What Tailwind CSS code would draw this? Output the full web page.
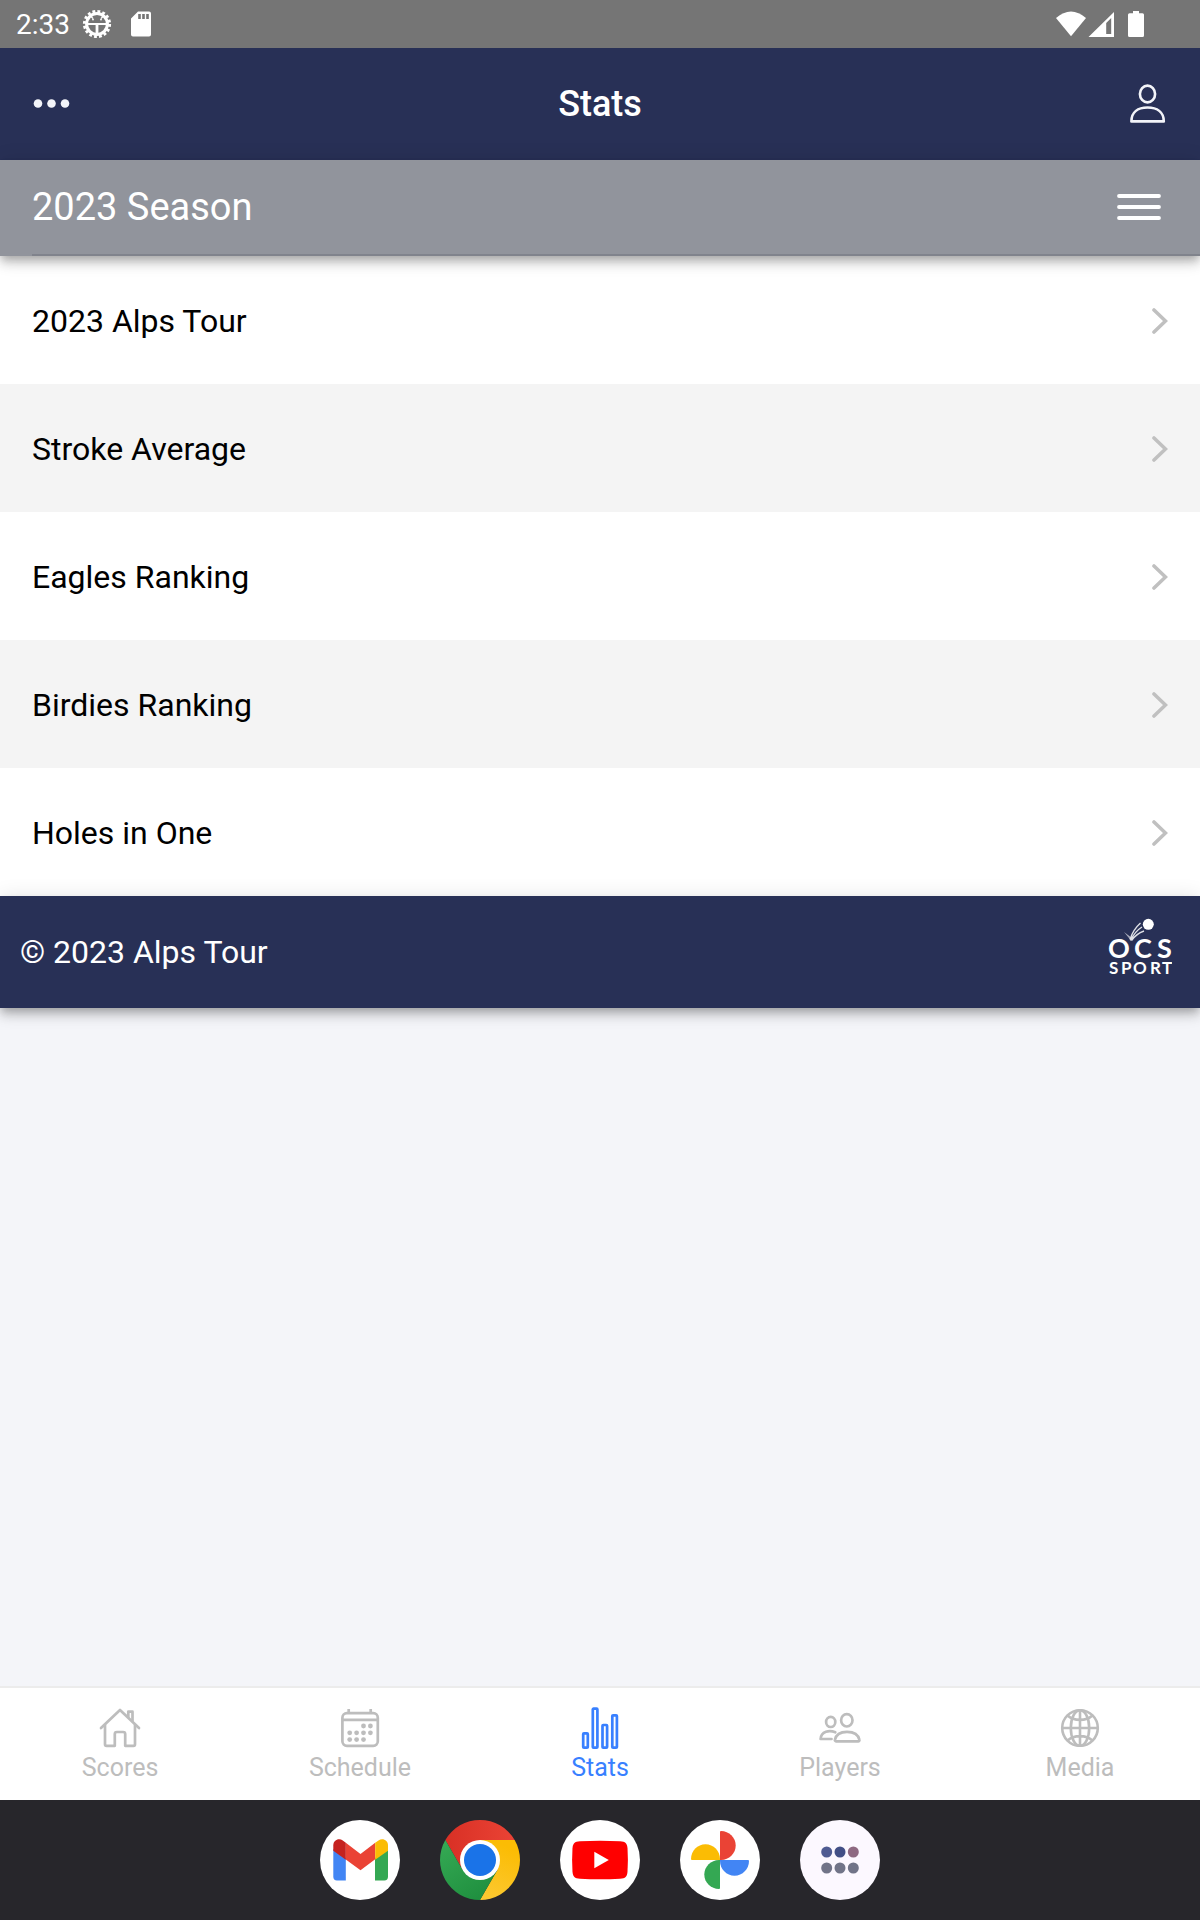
<!DOCTYPE html>
<html lang="en">
  <head>
    <meta charset="UTF-8" />
    <meta name="viewport" content="width=device-width, initial-scale=1.0" />
    <title>Stats</title>
    <script src="https://cdn.jsdelivr.net/npm/@tailwindcss/browser@4"></script>
  </head>
  <body class="bg-[#f4f5f9] font-['Roboto',sans-serif] text-black min-h-screen flex flex-col">
    <!-- Status bar -->
    <div class="bg-[#757575] text-white h-12 pl-4 pr-14 flex items-center justify-between">
      <div class="flex items-center">
        <span class="text-[28px] leading-8 pt-0.5">2:33</span>
        <svg class="w-8 h-8 ml-[11px]" viewBox="0 0 32 32" fill="none" stroke="currentColor">
          <circle cx="16" cy="16" r="12.5" stroke-width="3.2" stroke-dasharray="2.8 2.11" />
          <circle cx="16" cy="16" r="10.4" stroke-width="3" />
          <path d="M6 16h20" stroke-width="2" />
          <path d="M16 16v10" stroke-width="2.8" />
          <path d="M9 7.500l3 3M23 7.500l-3 3" stroke-width="1.200" />
          <circle cx="12" cy="11.500" r="0.900" fill="currentColor" stroke="none" />
          <circle cx="20" cy="11.500" r="0.900" fill="currentColor" stroke="none" />
        </svg>
        <svg class="w-6 h-7 ml-4" viewBox="0 0 24 28">
          <path fill="currentColor" fill-rule="evenodd" d="M9 1.500h11a2 2 0 0 1 2 2v21a2 2 0 0 1-2 2H4a2 2 0 0 1-2-2V8.500zM9.200 4v5h2.600V4zM13.200 4v5h2.600V4zM17.200 4v5h2.600V4z" />
        </svg>
      </div>
      <div class="flex items-center">
        <svg class="w-8 h-7" viewBox="0 0 32 28" fill="currentColor">
          <path d="M0 8Q15-5 30 8L15 26.300z" />
        </svg>
        <svg class="w-7 h-7" viewBox="0 0 28 28">
          <path fill="currentColor" fill-rule="evenodd" d="M26 2v25H.500zM23.200 8l-5 5v11h5z" />
        </svg>
        <svg class="w-4 h-7 ml-3" viewBox="0 0 16 28" fill="currentColor">
          <path d="M5 1h6v2.200h3.500A1.500 1.500 0 0 1 16 4.700v20.800a1.500 1.500 0 0 1-1.500 1.500h-13A1.500 1.500 0 0 1 0 25.500V4.700a1.500 1.500 0 0 1 1.500-1.500H5z" />
        </svg>
      </div>
    </div>

    <!-- Navbar -->
    <header class="bg-[#283056] text-white h-28 px-8 flex items-center justify-between">
      <button type="button" aria-label="More">
        <svg class="w-10 h-10" viewBox="0 0 40 40" fill="#f3f4f9">
          <circle cx="6" cy="19.500" r="4.300" />
          <circle cx="19.500" cy="19.500" r="4.300" />
          <circle cx="33" cy="19.500" r="4.300" />
        </svg>
      </button>
      <h1 class="text-4xl font-medium">Stats</h1>
      <button type="button" aria-label="Account">
        <svg class="w-10 h-10" viewBox="0 0 40 40" fill="none" stroke="#f3f4f9" stroke-width="2.600" stroke-linejoin="round">
          <ellipse cx="19.500" cy="10" rx="7.600" ry="8.400" />
          <path d="M3.400 37.400C3.400 28 10 23.500 19.500 23.500S35.800 28 35.800 37.400z" />
        </svg>
      </button>
    </header>

    <!-- Season -->
    <div class="relative z-10 bg-[#91949c] text-white pl-8 shadow-[0_4px_8px_-2px_rgba(0,0,0,0.2),0_8px_10px_0_rgba(0,0,0,0.14),0_2px_20px_0_rgba(0,0,0,0.12)]">
      <div class="h-24 pr-9 flex items-center justify-between border-b-2 border-[#80838c]">
        <h2 class="text-[38px] leading-12">2023 Season</h2>
        <button type="button" aria-label="Choose season">
          <svg class="w-12 h-8" viewBox="0 0 48 32" fill="none" stroke="currentColor" stroke-width="3.800" stroke-linecap="round">
            <path d="M3 5h40M3 16h40M3 27h40" />
          </svg>
        </button>
      </div>
    </div>

    <!-- Rankings -->
    <nav class="text-[32px] leading-10" aria-label="Rankings">
      <a href="#" class="bg-white h-32 px-8 pt-0.5 flex items-center justify-between">
        2023 Alps Tour
        <svg class="w-4 h-8" viewBox="0 0 16 32" fill="none" stroke="#c0c0c0" stroke-width="3.600" stroke-linecap="round"><path d="M2 5l11.500 11L2 27" /></svg>
      </a>
      <a href="#" class="bg-[#f4f4f4] h-32 px-8 pt-0.5 flex items-center justify-between">
        Stroke Average
        <svg class="w-4 h-8" viewBox="0 0 16 32" fill="none" stroke="#c0c0c0" stroke-width="3.600" stroke-linecap="round"><path d="M2 5l11.500 11L2 27" /></svg>
      </a>
      <a href="#" class="bg-white h-32 px-8 pt-0.5 flex items-center justify-between">
        Eagles Ranking
        <svg class="w-4 h-8" viewBox="0 0 16 32" fill="none" stroke="#c0c0c0" stroke-width="3.600" stroke-linecap="round"><path d="M2 5l11.500 11L2 27" /></svg>
      </a>
      <a href="#" class="bg-[#f4f4f4] h-32 px-8 pt-0.5 flex items-center justify-between">
        Birdies Ranking
        <svg class="w-4 h-8" viewBox="0 0 16 32" fill="none" stroke="#c0c0c0" stroke-width="3.600" stroke-linecap="round"><path d="M2 5l11.500 11L2 27" /></svg>
      </a>
      <a href="#" class="bg-white h-32 px-8 pt-0.5 flex items-center justify-between">
        Holes in One
        <svg class="w-4 h-8" viewBox="0 0 16 32" fill="none" stroke="#c0c0c0" stroke-width="3.600" stroke-linecap="round"><path d="M2 5l11.500 11L2 27" /></svg>
      </a>
    </nav>

    <!-- Copyright -->
    <footer class="relative z-10 bg-[#283056] text-white h-28 pl-5 pr-7 flex items-center justify-between shadow-[0_4px_8px_-2px_rgba(0,0,0,0.2),0_8px_10px_0_rgba(0,0,0,0.14),0_2px_20px_0_rgba(0,0,0,0.12)]">
      <p class="text-[32px] leading-10">© 2023 Alps Tour</p>
      <svg class="w-16 h-17" viewBox="0 0 64 68" fill="currentColor" role="img" aria-label="OCS Sport">
        <circle cx="40.300" cy="6.300" r="5.500" />
        <path d="M16 14l6 4.500.500 3.500z" opacity="0.600" />
        <path d="M22 21.500C24 15 28 9 32.500 5M22.500 22.500C25.500 16.500 29 12 34 9M23.500 22.500C27 17.500 30.500 15 36 13" fill="none" stroke="currentColor" stroke-width="1.400" opacity="0.850" />
        <g class="font-['Lato',sans-serif] font-bold text-[27px]">
          <text x="0" y="39.500">O</text>
          <text x="26" y="39.500">C</text>
          <text x="49" y="39.500">S</text>
        </g>
        <g class="font-['Lato',sans-serif] font-bold text-[17px]">
          <text x="1" y="56">S</text>
          <text x="13" y="56">P</text>
          <text x="25" y="56">O</text>
          <text x="42" y="56">R</text>
          <text x="54" y="56">T</text>
        </g>
      </svg>
    </footer>

    <!-- Tab bar -->
    <nav class="mt-auto bg-white border-t-2 border-[#ececec] text-[#bdbdbd] text-[25px] leading-8 grid grid-cols-5" aria-label="Main">
      <a href="#" class="h-28 pt-[18px] flex flex-col items-center gap-0.5">
        <svg class="w-11 h-11" viewBox="0 0 44 44" fill="none" stroke="currentColor" stroke-width="2.700" stroke-linecap="round" stroke-linejoin="round">
          <path d="M3 22L22 4 41 22" />
          <path d="M7 19v19.300a1.500 1.500 0 0 0 1.500 1.500h8.300V28a2 2 0 0 1 2-2h6.400a2 2 0 0 1 2 2v11.800h8.300a1.500 1.500 0 0 0 1.500-1.500V19" />
          <path d="M30.300 11V5.700h4.200V15" />
        </svg>
        Scores
      </a>
      <a href="#" class="h-28 pt-[18px] flex flex-col items-center gap-0.5">
        <svg class="w-11 h-11" viewBox="0 0 44 44" fill="none" stroke="currentColor" stroke-width="2.700">
          <rect x="4.400" y="7.200" width="35.400" height="32.600" rx="4.500" />
          <path d="M4 13.800h36M10.700 3v4M32.700 3v4" />
          <g fill="currentColor" stroke="none">
            <circle cx="25.500" cy="20" r="2.400" />
            <circle cx="32.400" cy="20" r="2.400" />
            <circle cx="11.700" cy="26.800" r="2.400" />
            <circle cx="18.600" cy="26.800" r="2.400" />
            <circle cx="25.500" cy="26.800" r="2.400" />
            <circle cx="32.400" cy="26.800" r="2.400" />
            <circle cx="11.700" cy="33.600" r="2.400" />
            <circle cx="18.600" cy="33.600" r="2.400" />
            <circle cx="25.500" cy="33.600" r="2.400" />
          </g>
        </svg>
        Schedule
      </a>
      <a href="#" class="h-28 pt-[18px] flex flex-col items-center gap-0.5 text-[#3880ff]" aria-current="page">
        <svg class="w-11 h-11" viewBox="0 0 44 44" fill="none" stroke="currentColor" stroke-width="2.700">
          <rect x="5.200" y="27.400" width="4.600" height="14.300" rx="0.800" />
          <rect x="14.800" y="2.600" width="4.600" height="39.100" rx="0.800" />
          <rect x="24.500" y="19" width="4.600" height="22.700" rx="0.800" />
          <rect x="34.300" y="9.300" width="4.600" height="32.400" rx="0.800" />
        </svg>
        Stats
      </a>
      <a href="#" class="h-28 pt-[18px] flex flex-col items-center gap-0.5">
        <svg class="w-11 h-11" viewBox="0 0 44 44" fill="none" stroke="currentColor" stroke-width="2.700" stroke-linecap="round" stroke-linejoin="round">
          <ellipse cx="12.700" cy="15.900" rx="4.600" ry="5.100" />
          <ellipse cx="28.800" cy="14.300" rx="5.700" ry="6.200" />
          <path d="M17.300 26.300C11.500 23.800 3 25 2.600 33H13.500" />
          <path d="M18 35.300a1.200 1.200 0 0 1-1.100-1.500C18 28.500 22.500 25.800 29 25.800S40.300 28.500 41.400 33.800a1.200 1.200 0 0 1-1.200 1.500z" />
        </svg>
        Players
      </a>
      <a href="#" class="h-28 pt-[18px] flex flex-col items-center gap-0.5">
        <svg class="w-11 h-11" viewBox="0 0 44 44" fill="none" stroke="currentColor" stroke-width="2.600">
          <circle cx="22" cy="22" r="17.800" />
          <ellipse cx="22" cy="22" rx="9.200" ry="17.800" />
          <path d="M4 22h36M22 4v36M9.500 9.500C16 15.300 28 15.300 34.500 9.500M9.500 34.500C16 28.700 28 28.700 34.500 34.500" />
        </svg>
        Media
      </a>
    </nav>

    <!-- Dock -->
    <div class="bg-[#27262b] h-30 flex items-center justify-center gap-10">
      <a href="#" aria-label="Gmail">
        <svg class="w-20 h-20" viewBox="0 0 80 80">
          <circle cx="40" cy="40" r="40" fill="#fff" />
          <path fill="#4285f4" d="M13.300 29v27.700a3.700 3.700 0 0 0 3.700 3.700h8.800V38z" />
          <path fill="#34a853" d="M68 29v27.700a3.700 3.700 0 0 1-3.700 3.700H55V38z" />
          <path fill="#ea4335" d="M25.800 22.800l14.700 11.300L55.200 22.800v16.500L40.500 50.300 25.800 39.500z" />
          <path fill="#c5221f" d="M13.300 30.800V25.500c0-5.200 5.300-7.800 9.500-5l3 2.300v16.900z" />
          <path fill="#fbbc04" d="M68 30.800V25.500c0-5.200-5.300-7.800-9.500-5l-3.300 2.300v16.900z" />
        </svg>
      </a>
      <a href="#" aria-label="Chrome">
        <svg class="w-20 h-20" viewBox="0 0 80 80">
          <defs>
            <linearGradient id="red"><stop stop-color="#d93025" /><stop offset="1" stop-color="#ea4335" /></linearGradient>
            <linearGradient id="yellow" x1="0" y1="1" x2="0.300" y2="0"><stop stop-color="#fcc934" /><stop offset="1" stop-color="#fbbc04" /></linearGradient>
            <linearGradient id="green" x1="0.800" y1="1" x2="0.200" y2="0"><stop stop-color="#1e8e3e" /><stop offset="1" stop-color="#34a853" /></linearGradient>
          </defs>
          <path fill="url(#red)" d="M5.360 20A40 40 0 0 1 74.640 20H40V40L22.680 50z" />
          <path fill="url(#yellow)" d="M74.640 20A40 40 0 0 1 40 80L57.320 50 40 40V20z" />
          <path fill="url(#green)" d="M40 80A40 40 0 0 1 5.360 20L22.680 50 40 40 57.320 50z" />
          <circle cx="40" cy="40" r="20" fill="#fff" />
          <circle cx="40" cy="40" r="16" fill="#1a73e8" />
        </svg>
      </a>
      <a href="#" aria-label="YouTube">
        <svg class="w-20 h-20" viewBox="0 0 80 80">
          <circle cx="40" cy="40" r="40" fill="#fff" />
          <path fill="#f00" d="M20 21.200Q40 20.200 60 21.200C65.500 21.500 67 23.500 67.500 28Q68.300 40 67.500 52C67 56.500 65.500 58.500 60 58.800Q40 59.800 20 58.800C14.500 58.500 13 56.500 12.500 52Q11.700 40 12.500 28C13 23.500 14.500 21.500 20 21.200z" />
          <path fill="#fff" d="M34.300 31.800L48.800 40 34.300 48.200z" />
        </svg>
      </a>
      <a href="#" aria-label="Photos">
        <svg class="w-20 h-20" viewBox="0 0 80 80">
          <circle cx="40" cy="40" r="40" fill="#fff" />
          <path fill="#ea4335" d="M40 12a1 1 0 0 1 1-1C49 11 55.700 17.500 55.700 25.500S49 40 41 40h-1z" />
          <path fill="#4285f4" d="M68 40a1 1 0 0 1 1 1C69 49 62.500 55.700 54.500 55.700S40 49 40 41v-1z" />
          <path fill="#34a853" d="M40 68a1 1 0 0 1-1 1C31 69 24.300 62.500 24.300 54.500S31 40 39 40h1z" />
          <path fill="#fbbc04" d="M12 40a1 1 0 0 1-1-1C11 31 17.500 24.300 25.500 24.300S40 31 40 39v1z" />
        </svg>
      </a>
      <a href="#" aria-label="All apps">
        <svg class="w-20 h-20" viewBox="0 0 80 80">
          <circle cx="40" cy="40" r="40" fill="#fcf8ff" />
          <circle cx="26.700" cy="32" r="5.500" fill="#4f5b92" />
          <circle cx="40" cy="32" r="5.500" fill="#424f86" />
          <circle cx="53.300" cy="32" r="5.500" fill="#8e6982" />
          <circle cx="26.700" cy="48" r="5.500" fill="#717488" />
          <circle cx="40" cy="48" r="5.500" fill="#717488" />
          <circle cx="53.300" cy="48" r="5.500" fill="#717488" />
        </svg>
      </a>
    </div>
  </body>
</html>
